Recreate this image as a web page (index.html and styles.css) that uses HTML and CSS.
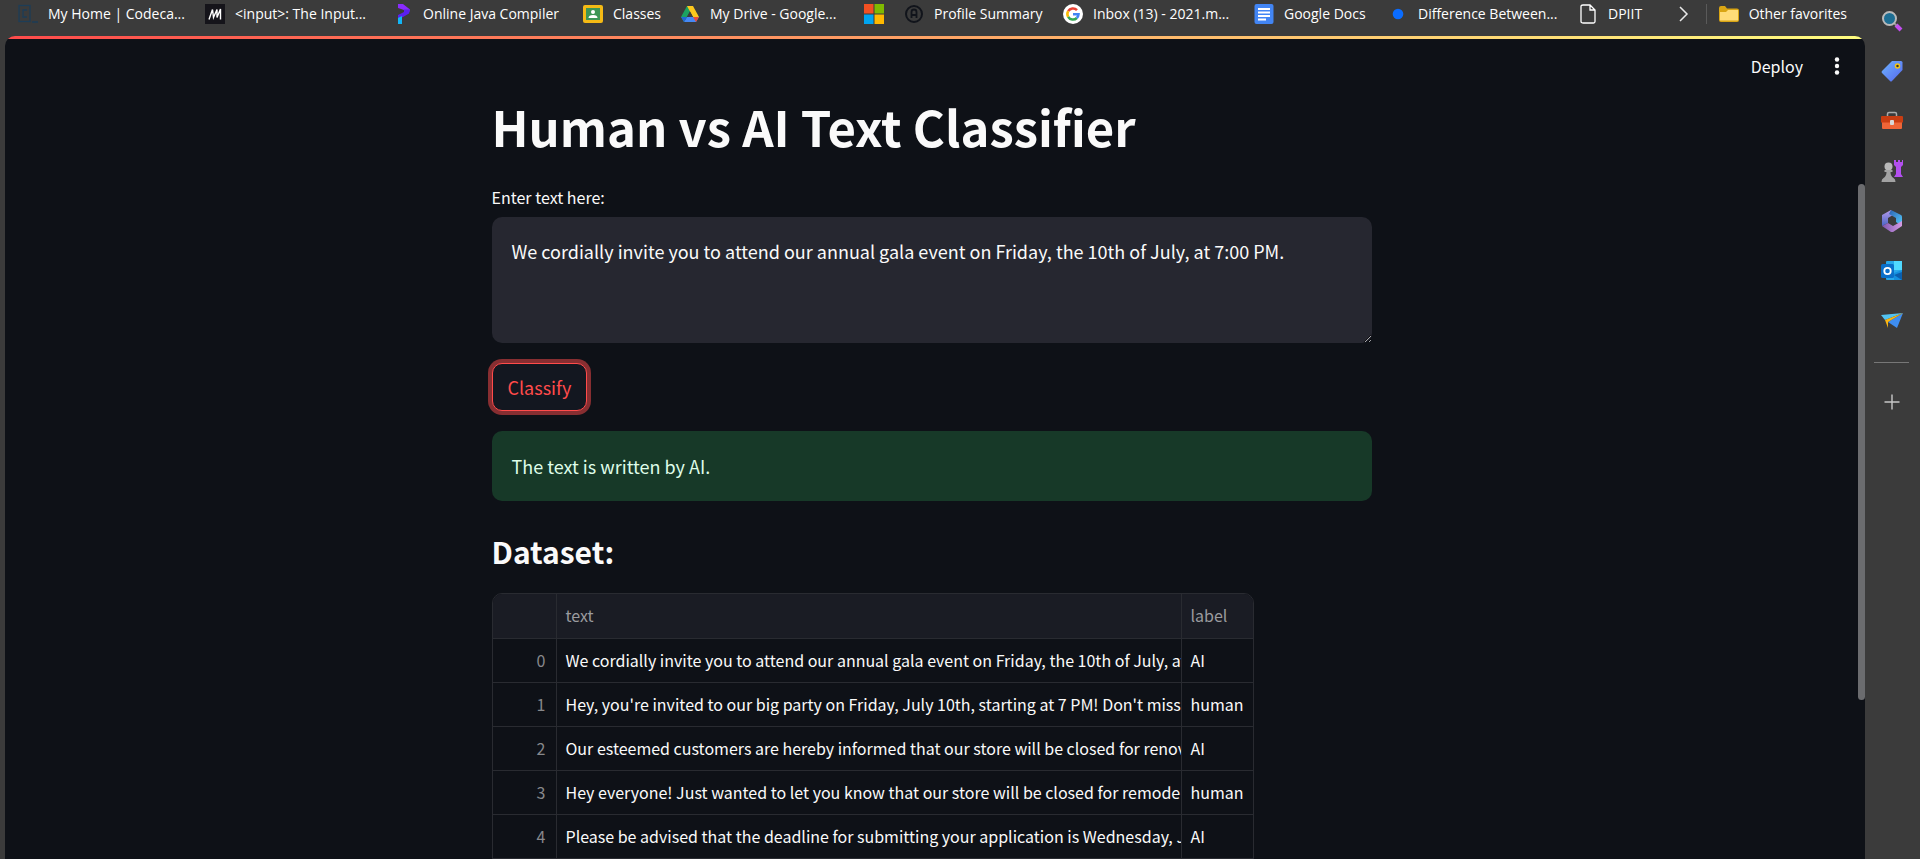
FILE: index.html
```html
<!DOCTYPE html>
<html lang="en">
<head>
<meta charset="utf-8">
<title>Human vs AI Text Classifier</title>
<link rel="stylesheet" href="styles.css">
</head>
<body>
<div class="browser">
  <div class="main-column">
    <nav class="favorites" aria-label="Favorites">
      <div class="bookmarks">
        <a class="bookmark" href="#"><svg viewBox="0 0 20 20"><g fill="none" stroke="#1d3d57" stroke-width="1.3"><rect x="1" y="1.500" width="11" height="16"/><path d="M9 6H5v7h4M14 18h6"/></g></svg><span>My Home | Codeca...</span></a>
        <a class="bookmark" href="#"><svg viewBox="0 0 20 20"><rect width="20" height="20" fill="#15141a"/><path d="M4 15.500L7.500 5.500 8.500 13.500 12 5.500 12 13.500 15.500 5V15.500" fill="none" stroke="#fff" stroke-width="1.400"/></svg><span>&lt;input&gt;: The Input...</span></a>
        <a class="bookmark" href="#"><svg viewBox="0 0 20 20"><path d="M5 0h5l7 5.500-1 3-5-2.500-6-2z" fill="#8a2bff"/><path d="M11 5.500l6 0-1 4-6 3.500-5 2v-4l6-3z" fill="#5a1ff0"/><path d="M5 14l4-2v8H5z" fill="#12b5f5"/></svg><span>Online Java Compiler</span></a>
        <a class="bookmark" href="#"><svg viewBox="0 0 20 20"><rect y="1" width="20" height="18" rx="2" fill="#f5ba15"/><rect x="3" y="4" width="14" height="12" fill="#3d9655"/><circle cx="10" cy="8" r="2" fill="#fff"/><path d="M5.500 14q0-3 4.500-3t4.500 3z" fill="#fff"/></svg><span>Classes</span></a>
        <a class="bookmark" href="#"><svg viewBox="0 0 20 20"><path d="M7 2h6L4 18 1 13z" fill="#1ba261"/><path d="M7 2h6l6 11h-6z" fill="#fcc71d"/><path d="M7 13h12l-3 5H4z" fill="#4688f4"/><path d="M13 13h6l-3 5z" fill="#e94b3b"/><path d="M1 13h6l-3 5z" fill="#2167d6"/><path d="M10 7.500L13 13H7z" fill="#3b3b3b"/></svg><span>My Drive - Google...</span></a>
        <a class="bookmark" href="#" aria-label="Microsoft"><svg viewBox="0 0 20 20"><path d="M0 0h9.500v9.500H0z" fill="#f25022"/><path d="M10.500 0H20v9.500h-9.500z" fill="#7fba00"/><path d="M0 10.500h9.500V20H0z" fill="#00a4ef"/><path d="M10.500 10.500H20V20h-9.500z" fill="#ffb900"/></svg></a>
        <a class="bookmark" href="#"><svg viewBox="0 0 20 20"><g fill="none" stroke="#11141b"><circle cx="10" cy="10" r="8" stroke-width="2"/><path d="M7.500 14V8q0-2.500 2.500-2.500T12.500 8v6M7.500 11h5" stroke-width="1.800"/></g></svg><span>Profile Summary</span></a>
        <a class="bookmark" href="#"><svg viewBox="0 0 20 20"><circle cx="10" cy="10" r="10" fill="#fff"/><g fill="none" stroke-width="2.600"><path d="M5.200 7.200A5.500 5.500 0 0 1 14 6.200" stroke="#ea4335"/><path d="M5.200 12.800a5.500 5.500 0 0 1 0-5.600" stroke="#fbbc05"/><path d="M13.800 14a5.500 5.500 0 0 1-8.600-1.200" stroke="#34a853"/><path d="M10 10.300h5.500a5.500 5.500 0 0 1-1.700 3.700" stroke="#4285f4"/></g></svg><span>Inbox (13) - 2021.m...</span></a>
        <a class="bookmark" href="#"><svg viewBox="0 0 20 20"><rect x="0.500" width="19" height="20" rx="2" fill="#4285f4"/><path d="M4 5h12M4 8.500h12M4 12h12M4 15.500h8" stroke="#fff" stroke-width="1.800"/></svg><span>Google Docs</span></a>
        <a class="bookmark" href="#"><svg viewBox="0 0 20 20"><circle cx="10" cy="10" r="5.300" fill="#0a6cff"/></svg><span>Difference Between...</span></a>
        <a class="bookmark" href="#"><svg viewBox="0 0 20 20"><path d="M5 1h7l5 5v11.500q0 1.500-1.500 1.500h-10Q3 19 3 17.500V2.500Q3 1 5 1zM12 1v5h5" fill="none" stroke="#fff" stroke-width="1.300"/></svg><span>DPIIT</span></a>
      </div>
      <button class="icon-button overflow" type="button" aria-label="More favorites"><svg viewBox="0 0 20 20"><path d="M6 3l7 7-7 7" fill="none" stroke="#e8e8e8" stroke-width="1.500"/></svg></button>
      <a class="bookmark other" href="#"><svg viewBox="0 0 20 20"><path d="M0 4q0-2 2-2h4l2 2.500h10q2 0 2 2V16q0 2-2 2H2q-2 0-2-2z" fill="#d9a514"/><path d="M1 8h6l2-2h10v10.500H1z" fill="#ffdc78"/></svg><span>Other favorites</span></a>
    </nav>
    <div class="viewport">
      <header class="toolbar">
        <button class="deploy" type="button">Deploy</button>
        <button class="icon-button" type="button" aria-label="Main menu"><svg viewBox="0 0 20 20"><g fill="#fafafa"><circle cx="10" cy="3.500" r="2.200"/><circle cx="10" cy="10" r="2.200"/><circle cx="10" cy="16.500" r="2.200"/></g></svg></button>
      </header>
      <main class="content">
        <h1>Human vs AI Text Classifier</h1>
        <form class="form">
          <label for="entry">Enter text here:</label>
          <textarea id="entry" spellcheck="false">We cordially invite you to attend our annual gala event on Friday, the 10th of July, at 7:00 PM.</textarea>
          <button class="classify" type="button">Classify</button>
        </form>
        <p class="result" role="status">The text is written by AI.</p>
        <h2>Dataset:</h2>
        <div class="table-frame">
          <table>
            <colgroup><col class="col-index"><col class="col-text"><col class="col-label"></colgroup>
            <thead><tr><th aria-label="index"></th><th>text</th><th>label</th></tr></thead>
            <tbody>
              <tr><td>0</td><td>We cordially invite you to attend our annual gala event on Friday, the 10th of July, at 7</td><td>AI</td></tr>
              <tr><td>1</td><td>Hey, you're invited to our big party on Friday, July 10th, starting at 7 PM! Don't miss it</td><td>human</td></tr>
              <tr><td>2</td><td>Our esteemed customers are hereby informed that our store will be closed for renova</td><td>AI</td></tr>
              <tr><td>3</td><td>Hey everyone! Just wanted to let you know that our store will be closed for remodelin</td><td>human</td></tr>
              <tr><td>4</td><td>Please be advised that the deadline for submitting your application is Wednesday, Ju</td><td>AI</td></tr>
              <tr><td></td><td></td><td></td></tr>
            </tbody>
          </table>
        </div>
      </main>
      <div class="scroll-thumb"></div>
    </div>
  </div>
  <aside class="sidebar" aria-label="Browser tools">
    <button class="tool" type="button" aria-label="Search"><svg viewBox="0 0 22 22"><path d="M15 15l5 5" stroke="#c44df0" stroke-width="4"/><path d="M12.500 12.500l3 3" stroke="#999" stroke-width="2"/><circle cx="8.500" cy="8.500" r="6.500" fill="#1e6e93" stroke="#b9b9b9" stroke-width="2"/></svg></button>
    <button class="tool" type="button" aria-label="Shopping"><svg viewBox="0 0 22 22"><defs><linearGradient id="tag" x2="1" y2="1"><stop stop-color="#6eb4ff"/><stop offset="1" stop-color="#5567ee"/></linearGradient></defs><path d="M11 1h9q1.500 0 1.500 1.500V10L11 21q-1 1-2 0l-8-8q-1-1 0-2z" fill="url(#tag)"/><circle cx="16.500" cy="6" r="2" fill="#333" stroke="#f5c518" stroke-width="1.500"/></svg></button>
    <button class="tool" type="button" aria-label="Tools"><svg viewBox="0 0 22 22"><path d="M6.500 7V4q0-1.500 1.500-1.500h6q1.500 0 1.500 1.500v3" fill="none" stroke="#aaa" stroke-width="1.500"/><path d="M1 12h20v6q0 1-1 1H2q-1 0-1-1z" fill="#ef6537"/><path d="M1 6h20q1 0 1 1v5.500H0V7q0-1 1-1z" fill="#c93d12"/><rect x="9" y="10" width="4" height="5" rx="1" fill="#d8d8d8"/></svg></button>
    <button class="tool" type="button" aria-label="Games"><svg viewBox="0 0 22 22"><path d="M13 0h2v2h2V0h2v2h2V0h1v5l-2 2v7l2 3h-9l2-3V7l-2-2z" fill="#b34ff0"/><circle cx="7.500" cy="6.500" r="4" fill="#b8b8b8"/><path d="M3.500 10h8v2h-2q0 4 3 6 2 1 2 4H0.500q0-3 2-4 3-2 3-6h-2z" fill="#a2a2a2"/></svg></button>
    <button class="tool" type="button" aria-label="Microsoft 365"><svg viewBox="0 0 22 22"><defs><linearGradient id="m1" x2="0" y2="1"><stop stop-color="#b59ae8"/><stop offset="1" stop-color="#4a65c8"/></linearGradient><linearGradient id="m2" x2="1" y2="1"><stop stop-color="#2c5fb0"/><stop offset="1" stop-color="#56cfff"/></linearGradient><linearGradient id="m3" x2="1"><stop stop-color="#7c54b0"/><stop offset="1" stop-color="#d69ce4"/></linearGradient></defs><path d="M10 0L1 5v11l6-3V8l5-3z" fill="url(#m1)"/><path d="M10 0l10 5q1 .5 1 2v9l-6-4V8L8 4z" fill="url(#m2)"/><path d="M1 16l6-3 5 3 9-5v5l-9 6h-2z" fill="url(#m3)"/></svg></button>
    <button class="tool" type="button" aria-label="Outlook"><svg viewBox="0 0 22 22"><rect x="5" y="1" width="16" height="19" rx="1" fill="#28a8ea"/><path d="M13 1h8v9h-8z" fill="#50d9ff"/><path d="M13 13l8-3v10h-8z" fill="#1490df"/><path d="M21 12v8L13 15z" fill="#0b5fae"/><rect y="4" width="13" height="14" rx="1.500" fill="#0a6fc9"/><circle cx="6.500" cy="11" r="3.200" fill="none" stroke="#fff" stroke-width="1.800"/></svg></button>
    <button class="tool" type="button" aria-label="Drop"><svg viewBox="0 0 22 22"><path d="M22 3l-6 15-9-6z" fill="#3e8df0"/><path d="M0 5l22-2L4 10z" fill="#52c3f1"/><path d="M4 10l18-7L7 12v6z" fill="#f9b512"/></svg></button>
    <hr class="divider">
    <button class="tool" type="button" aria-label="Add"><svg viewBox="0 0 22 22"><path d="M11 3.500v15M3.500 11h15" stroke="#c8c8c8" stroke-width="1.400"/></svg></button>
  </aside>
</div>
</body>
</html>
```
FILE: styles.css
```css
:root {
  color-scheme: dark;
  --chrome: #3b3b3b;
  --page: #0e1117;
  --panel: #262730;
  --line: #292b31;
  --text: #fafafa;
  --accent: #ff4b4b;
}

* {
  box-sizing: border-box;
}

body {
  margin: 0;
  background: var(--chrome);
  color: var(--text);
  font: 16px/24px "Noto Sans CJK SC", "Noto Sans", sans-serif;
}

button {
  margin: 0;
  padding: 0;
  border: 0;
  background: none;
  color: inherit;
  font: inherit;
}

svg {
  display: block;
  flex: none;
  width: 20px;
  height: 20px;
}

.browser {
  display: flex;
  height: 100vh;
  overflow: hidden;
}

.main-column {
  display: flex;
  flex: 1;
  flex-direction: column;
  min-width: 0;
}

/* Favorites bar */
.favorites {
  display: flex;
  flex: none;
  align-items: center;
  height: 36px;
  padding: 0 18px 8px;
  font: 14px/20px "Open Sans", "Noto Sans", sans-serif;
}

.bookmarks {
  display: grid;
  flex: 1;
  grid-template-columns: 187px 188px 190px 97px 184px 40px 159px 191px 134px 190px 1fr;
}

.bookmark {
  display: flex;
  align-items: center;
  gap: 10px;
  color: #fff;
  text-decoration: none;
  white-space: nowrap;
}

.overflow {
  margin-right: 12px;
}

.other {
  padding-left: 12px;
  border-left: 1px solid #5a5a5a;
}

/* App page */
.viewport {
  position: relative;
  flex: 1;
  min-height: 0;
  margin-left: 5px;
  padding-right: 7px;
  overflow: hidden;
  border-radius: 10px 10px 0 0;
  background: linear-gradient(90deg, #ff4b4b, #fffd80) top / 100% 3px no-repeat var(--page);
}

.toolbar {
  display: flex;
  align-items: center;
  justify-content: flex-end;
  gap: 24px;
  padding: 18px 11px 16px;
}

.content {
  max-width: 880px;
  margin: 0 auto;
}

h1 {
  margin: 0 0 27px;
  font-size: 49px;
  font-weight: 700;
  line-height: 64px;
}

.form {
  display: flex;
  flex-direction: column;
  align-items: flex-start;
}

label {
  margin-bottom: 8px;
}

textarea {
  width: 100%;
  height: 126px;
  margin-bottom: 20px;
  padding: 20px;
  resize: vertical;
  border: 0;
  border-radius: 10px;
  background: var(--panel);
  color: var(--text);
  font: 18px/28px "Noto Sans CJK SC", "Noto Sans", sans-serif;
}

.classify {
  padding: 9px 15px;
  border: 1px solid var(--accent);
  border-radius: 10px;
  background: #131720;
  box-shadow: 0 0 0 4px #872e31;
  color: var(--accent);
  font-size: 18px;
  line-height: 28px;
}

.result {
  margin: 20px 0 30px;
  padding: 20px;
  border-radius: 10px;
  background: #173928;
  color: #dffde9;
  font-size: 18px;
  line-height: 30px;
}

h2 {
  margin: 0 0 22px;
  font-size: 30px;
  line-height: 40px;
}

.table-frame {
  max-width: 762px;
  overflow: hidden;
  border: 1px solid var(--line);
  border-radius: 10px;
}

table {
  width: 100%;
  table-layout: fixed;
  border-collapse: separate;
  border-spacing: 0;
}

.col-index {
  width: 63px;
}

.col-label {
  width: 72px;
}

th,
td {
  height: 44px;
  padding: 0 0 2px 9px;
  overflow: hidden;
  border-bottom: 1px solid var(--line);
  border-left: 1px solid var(--line);
  font-weight: 400;
  text-align: left;
  white-space: nowrap;
}

th {
  height: 45px;
  background: #1a1c24;
  color: #9a9b9f;
}

th:first-child,
td:first-child {
  padding: 0 10px 2px 0;
  border-left: 0;
  color: #87888b;
  text-align: right;
}

.scroll-thumb {
  position: absolute;
  top: 148px;
  right: 0;
  width: 7px;
  height: 516px;
  border-radius: 4px;
  background: #6b6c6f;
}

/* Browser side rail */
.sidebar {
  display: flex;
  flex: none;
  flex-direction: column;
  align-items: center;
  gap: 28px;
  width: 55px;
  padding: 10px 2px 0 0;
}

.tool svg {
  width: 22px;
  height: 22px;
}

.divider {
  width: 35px;
  margin: 2px 0 0;
  border: 0;
  border-top: 1px solid #777;
}
```
